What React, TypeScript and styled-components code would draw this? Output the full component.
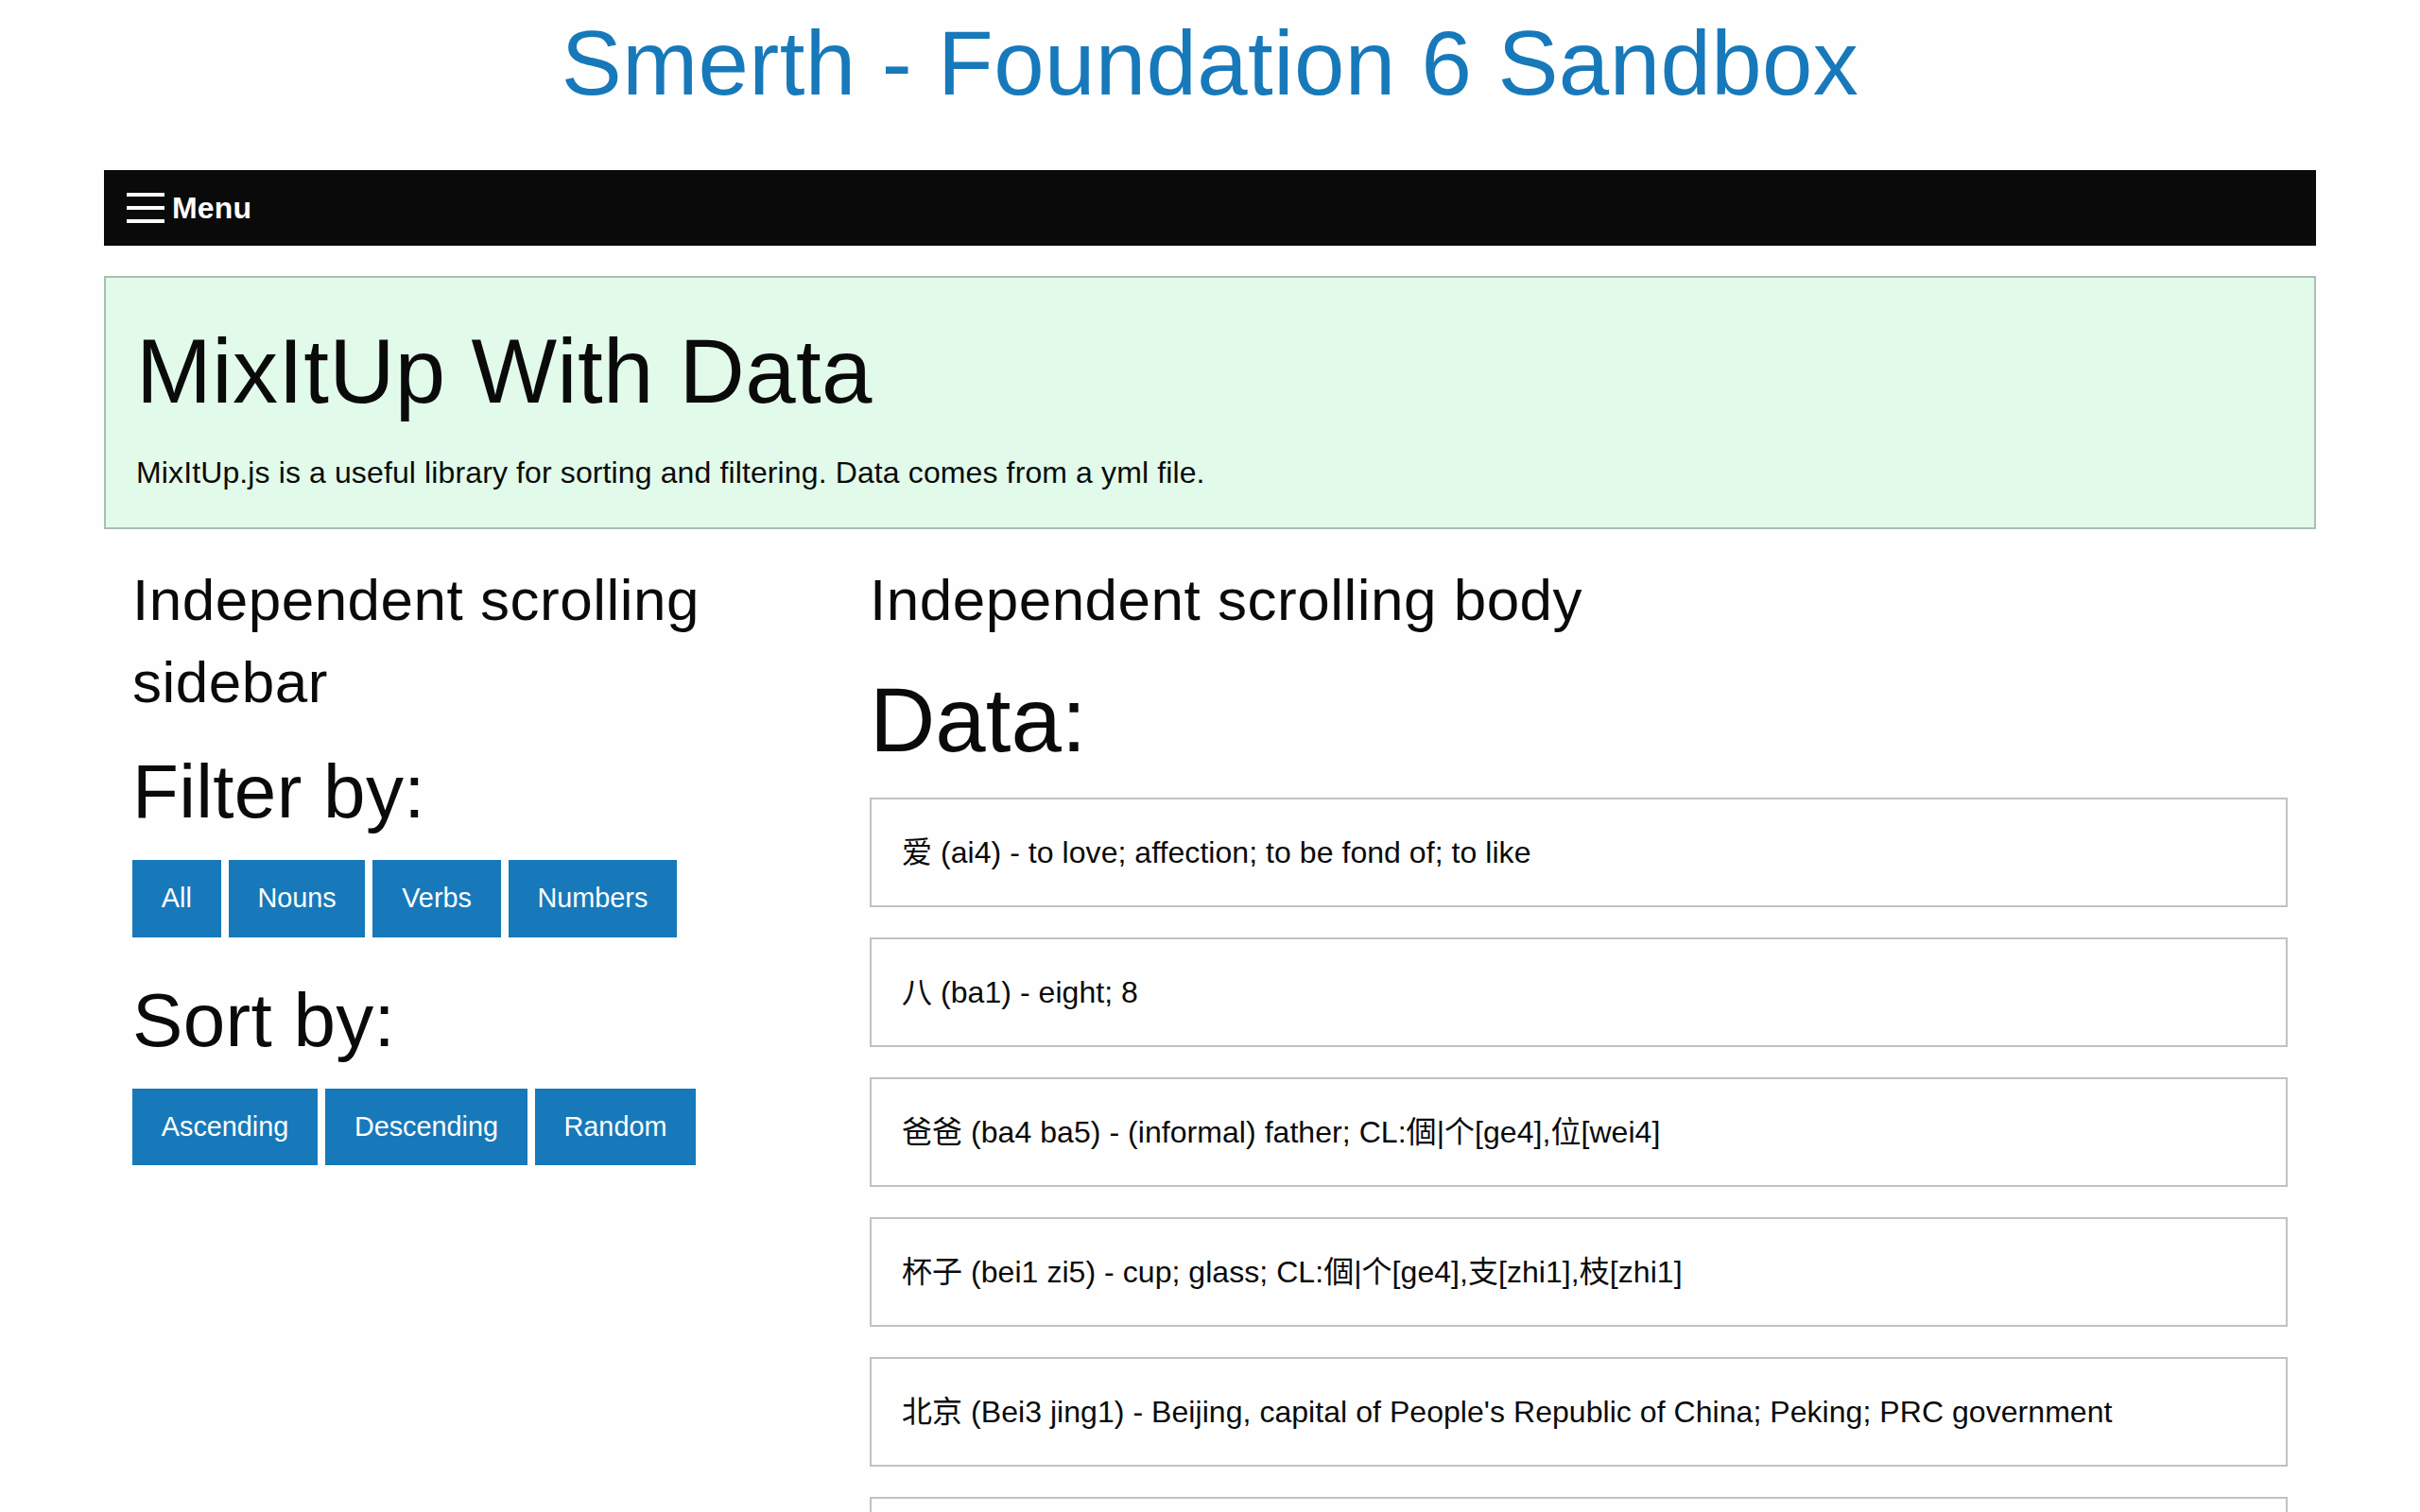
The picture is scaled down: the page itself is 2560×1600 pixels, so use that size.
import React from "react";
import styled, { createGlobalStyle } from "styled-components";

const FONT = `"Liberation Sans", "Noto Sans CJK SC", Arial, sans-serif`;

const GlobalStyle = createGlobalStyle`
  html, body {
    margin: 0;
    padding: 0;
    height: 100%;
    overflow: hidden;
    background: #fefefe;
  }
  body {
    font-family: ${FONT};
    font-size: 32px;
    line-height: 1.5;
    color: #0a0a0a;
  }
  #root { height: 100%; }
  * { box-sizing: border-box; }
`;

const Page = styled.div`
  height: 100vh;
  display: flex;
  flex-direction: column;
`;

const Container = styled.div`
  width: 100%;
  max-width: 2400px;
  margin: 0 auto;
  padding: 0 30px;
  display: flex;
  flex-direction: column;
  flex: 1;
  min-height: 0;
`;

const SiteTitle = styled.h1`
  margin: 0 0 45.6px;
  font-size: 96px;
  line-height: 1.4;
  font-weight: 400;
  letter-spacing: 0.4px;
  text-align: center;
  color: #1779ba;
`;

const TitleBar = styled.nav`
  display: flex;
  align-items: center;
  background: #0a0a0a;
  color: #fefefe;
  padding: 16px;
  margin-bottom: 32px;
`;

const MenuIcon = styled.button`
  width: 40px;
  height: 32px;
  margin: 0 8px;
  padding: 0;
  border: 0;
  background: transparent;
  cursor: pointer;
  display: flex;
  flex-direction: column;
  justify-content: space-between;
`;

const MenuBar = styled.span`
  display: block;
  height: 4px;
  width: 100%;
  background: #fefefe;
`;

const TitleBarTitle = styled.div`
  font-weight: 700;
  font-size: 32px;
  line-height: 1.5;
  letter-spacing: 0.2px;
`;

const Callout = styled.div<{ $tone?: "success" | "plain" }>`
  border: 2px solid rgba(10, 10, 10, 0.25);
  padding: 32px;
  margin-bottom: 32px;
  background: ${(p) => (p.$tone === "success" ? "#e1faea" : "#fefefe")};
  color: #0a0a0a;
`;

const CalloutHeading = styled.h1`
  margin: 0 0 16px;
  font-size: 96px;
  line-height: 1.4;
  font-weight: 400;
  letter-spacing: 0.3px;
`;

const CalloutText = styled.p`
  margin: 0;
  font-size: 32px;
  line-height: 1.56;
  letter-spacing: 0.12px;
`;

const Grid = styled.div`
  display: grid;
  grid-template-columns: 1fr 2fr;
  flex: 1;
  min-height: 0;
`;

const Cell = styled.section`
  padding: 0 30px;
  overflow-y: auto;
  min-height: 0;
  scrollbar-width: none;
  &::-webkit-scrollbar { display: none; }
`;

const SectionHeading = styled.h3`
  margin: 0 0 16px;
  font-size: 62px;
  line-height: 1.4;
  font-weight: 400;
  letter-spacing: 0.5px;
`;

const SubHeading = styled.h2`
  margin: 0 0 16px;
  font-size: 80px;
  line-height: 1.4;
  font-weight: 400;
  letter-spacing: 0.3px;
`;

const BigHeading = styled.h1`
  margin: 0 0 15px;
  font-size: 96px;
  line-height: 1.4;
  font-weight: 400;
`;

const ButtonGroup = styled.div`
  display: flex;
  flex-wrap: wrap;
  gap: 8px;
  margin-bottom: 32px;
`;

const Button = styled.button`
  font-family: ${FONT};
  font-size: 28.8px;
  line-height: 1;
  padding: 0.85em 1em;
  border: 2px solid transparent;
  border-radius: 0;
  background: #1779ba;
  color: #fefefe;
  cursor: pointer;
  margin: 0;
`;

const EntryCard = styled(Callout)`
  font-size: 32px;
  line-height: 1.5;
  letter-spacing: 0.05px;
`;

const filters = ["All", "Nouns", "Verbs", "Numbers"];
const sorts = ["Ascending", "Descending", "Random"];

const entries = [
  "爱 (ai4) - to love; affection; to be fond of; to like",
  "八 (ba1) - eight; 8",
  "爸爸 (ba4 ba5) - (informal) father; CL:個|个[ge4],位[wei4]",
  "杯子 (bei1 zi5) - cup; glass; CL:個|个[ge4],支[zhi1],枝[zhi1]",
  "北京 (Bei3 jing1) - Beijing, capital of People's Republic of China; Peking; PRC government",
  "本 (ben3) - roots or stems of plants; origin; source; this; the current; root; foundation",
  "不 (bu4) - (negative prefix); not; no",
  "不客气 (bu4 ke4 qi5) - you're welcome; don't mention it; impolite; rude",
  "菜 (cai4) - dish (type of food); vegetables; vegetable; cuisine",
  "茶 (cha2) - tea; tea plant; CL:杯[bei1],壺|壶[hu2]",
];

export default function App() {
  return (
    <Page>
      <GlobalStyle />
      <Container>
        <SiteTitle>Smerth - Foundation 6 Sandbox</SiteTitle>
        <TitleBar>
          <MenuIcon aria-label="Menu">
            <MenuBar />
            <MenuBar />
            <MenuBar />
          </MenuIcon>
          <TitleBarTitle>Menu</TitleBarTitle>
        </TitleBar>
        <Callout $tone="success">
          <CalloutHeading>MixItUp With Data</CalloutHeading>
          <CalloutText>
            MixItUp.js is a useful library for sorting and filtering. Data comes from a yml file.
          </CalloutText>
        </Callout>
        <Grid>
          <Cell>
            <SectionHeading>Independent scrolling sidebar</SectionHeading>
            <SubHeading>Filter by:</SubHeading>
            <ButtonGroup>
              {filters.map((f) => (
                <Button key={f}>{f}</Button>
              ))}
            </ButtonGroup>
            <SubHeading>Sort by:</SubHeading>
            <ButtonGroup>
              {sorts.map((s) => (
                <Button key={s}>{s}</Button>
              ))}
            </ButtonGroup>
          </Cell>
          <Cell>
            <SectionHeading>Independent scrolling body</SectionHeading>
            <BigHeading>Data:</BigHeading>
            {entries.map((e) => (
              <EntryCard key={e}>{e}</EntryCard>
            ))}
          </Cell>
        </Grid>
      </Container>
    </Page>
  );
}
